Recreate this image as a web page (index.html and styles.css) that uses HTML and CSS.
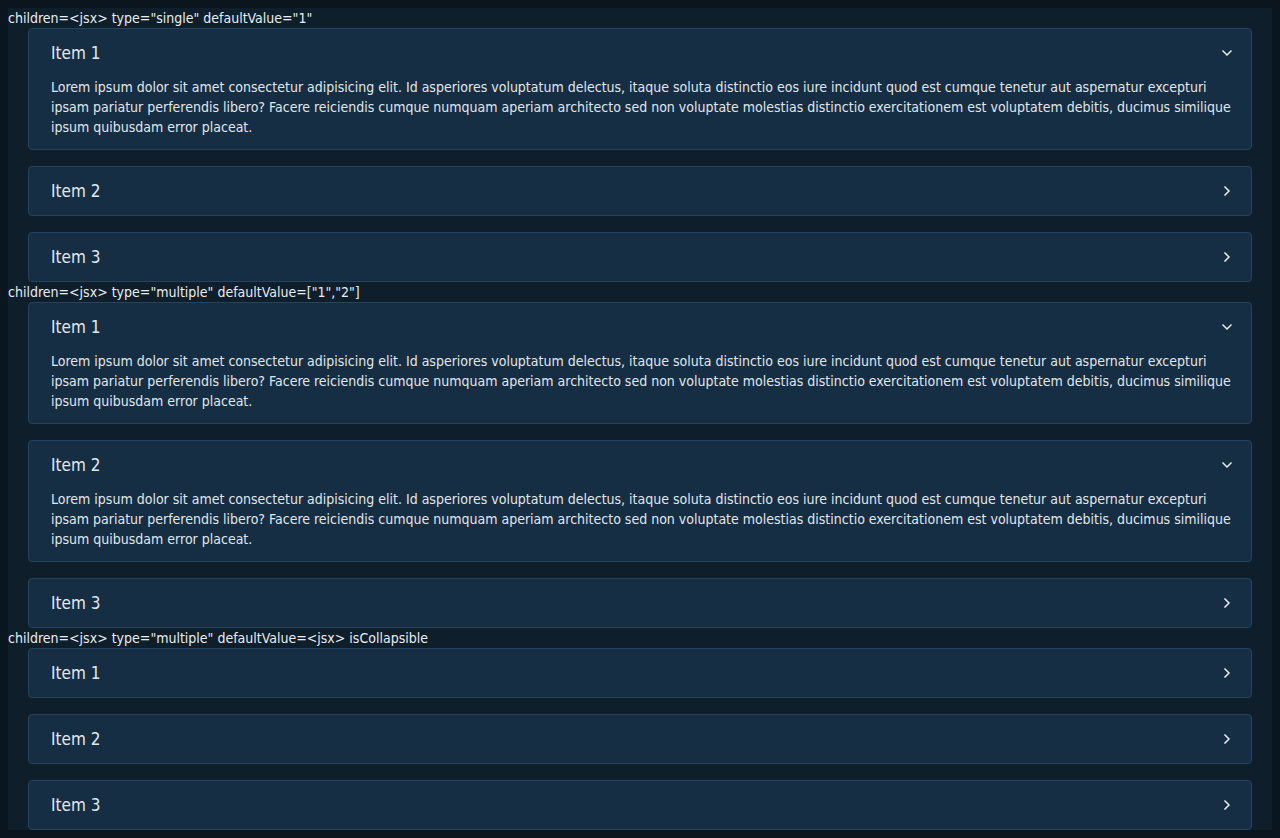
FILE: index.html
```html
<!DOCTYPE html>
<html lang="en">
<head>
<meta charset="utf-8">
<title>Accordion</title>
<link rel="stylesheet" href="styles.css">
</head>
<body>
<div class="page">
  <div class="label">children=&lt;jsx&gt; type="single" defaultValue="1"</div>
  <div class="accordion">
    <div class="item">
      <div class="header"><span class="title">Item 1</span><svg class="chev" viewBox="0 0 10 10"><path d="M1 3 L5 7 L9 3"/></svg></div>
      <div class="content">Lorem ipsum dolor sit amet consectetur adipisicing elit. Id asperiores voluptatum delectus, itaque soluta distinctio eos iure incidunt quod est cumque tenetur aut aspernatur excepturi ipsam pariatur perferendis libero? Facere reiciendis cumque numquam aperiam architecto sed non voluptate molestias distinctio exercitationem est voluptatem debitis, ducimus similique ipsum quibusdam error placeat.</div>
    </div>
    <div class="item">
      <div class="header"><span class="title">Item 2</span><svg class="chev" viewBox="0 0 10 10"><path d="M3 1 L7 5 L3 9"/></svg></div>
    </div>
    <div class="item">
      <div class="header"><span class="title">Item 3</span><svg class="chev" viewBox="0 0 10 10"><path d="M3 1 L7 5 L3 9"/></svg></div>
    </div>
  </div>

  <div class="label">children=&lt;jsx&gt; type="multiple" defaultValue=["1","2"]</div>
  <div class="accordion">
    <div class="item">
      <div class="header"><span class="title">Item 1</span><svg class="chev" viewBox="0 0 10 10"><path d="M1 3 L5 7 L9 3"/></svg></div>
      <div class="content">Lorem ipsum dolor sit amet consectetur adipisicing elit. Id asperiores voluptatum delectus, itaque soluta distinctio eos iure incidunt quod est cumque tenetur aut aspernatur excepturi ipsam pariatur perferendis libero? Facere reiciendis cumque numquam aperiam architecto sed non voluptate molestias distinctio exercitationem est voluptatem debitis, ducimus similique ipsum quibusdam error placeat.</div>
    </div>
    <div class="item">
      <div class="header"><span class="title">Item 2</span><svg class="chev" viewBox="0 0 10 10"><path d="M1 3 L5 7 L9 3"/></svg></div>
      <div class="content">Lorem ipsum dolor sit amet consectetur adipisicing elit. Id asperiores voluptatum delectus, itaque soluta distinctio eos iure incidunt quod est cumque tenetur aut aspernatur excepturi ipsam pariatur perferendis libero? Facere reiciendis cumque numquam aperiam architecto sed non voluptate molestias distinctio exercitationem est voluptatem debitis, ducimus similique ipsum quibusdam error placeat.</div>
    </div>
    <div class="item">
      <div class="header"><span class="title">Item 3</span><svg class="chev" viewBox="0 0 10 10"><path d="M3 1 L7 5 L3 9"/></svg></div>
    </div>
  </div>

  <div class="label">children=&lt;jsx&gt; type="multiple" defaultValue=&lt;jsx&gt; isCollapsible</div>
  <div class="accordion">
    <div class="item">
      <div class="header"><span class="title">Item 1</span><svg class="chev" viewBox="0 0 10 10"><path d="M3 1 L7 5 L3 9"/></svg></div>
    </div>
    <div class="item">
      <div class="header"><span class="title">Item 2</span><svg class="chev" viewBox="0 0 10 10"><path d="M3 1 L7 5 L3 9"/></svg></div>
    </div>
    <div class="item">
      <div class="header"><span class="title">Item 3</span><svg class="chev" viewBox="0 0 10 10"><path d="M3 1 L7 5 L3 9"/></svg></div>
    </div>
  </div>
</div>
</body>
</html>
```
FILE: styles.css
```css
html, body {
  background: #0a151e;
}
body {
  margin: 8px;
  font-family: "DejaVu Sans Condensed", "DejaVu Sans", sans-serif;
  color: #e4eaef;
}
.page {
  background: #0f1e2b;
}
.label {
  font-size: 14px;
  line-height: 20px;
  color: #e8edf1;
}
.accordion {
  display: flex;
  flex-direction: column;
  gap: 16px;
  margin: 0 20px;
}
.item {
  background: #162e43;
  border: 1px solid #24435c;
  border-radius: 4px;
}
.header {
  height: 48px;
  display: flex;
  align-items: center;
  justify-content: space-between;
  padding: 0 19px 0 22px;
}
.title {
  font-size: 17px;
  line-height: 24px;
  color: #e2e8ee;
}
.chev {
  width: 10px;
  height: 10px;
  fill: none;
  stroke: #e8edf1;
  stroke-width: 1.5;
  stroke-linecap: square;
  stroke-linejoin: miter;
}
.content {
  padding: 0 12px 12px 22px;
  font-size: 14px;
  line-height: 20px;
  color: #e0e6eb;
}
```
